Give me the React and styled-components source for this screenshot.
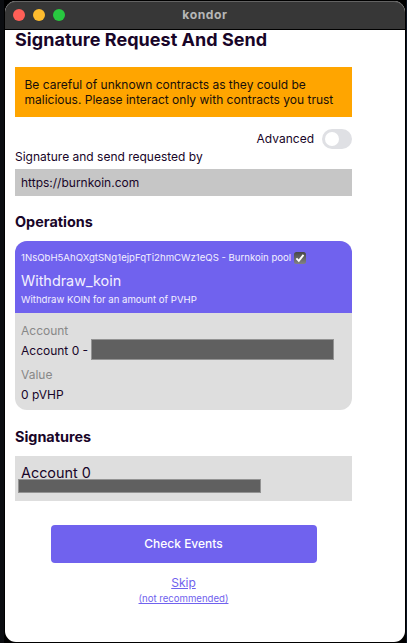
import React from 'react';
import styled, { createGlobalStyle } from 'styled-components';

const GlobalStyle = createGlobalStyle`
  * { box-sizing: border-box; }
  body { margin: 0; background: #05070b; }
`;

const Desktop = styled.div`
  height: 643px;
  padding: 1px 2px 1px 5px;
  overflow: hidden;
  background: linear-gradient(90deg, #0b0d11 0 4px, #000 4px 406px, #0a1320 406px);
  font-family: Inter, 'Liberation Sans', sans-serif;
  color: #180528;
`;

const Window = styled.div`
  height: 641px;
  display: flex;
  flex-direction: column;
  overflow: hidden;
  background: #fff;
  border-radius: 11px;
`;

const TitleBar = styled.header`
  height: 29px;
  flex: none;
  display: grid;
  grid-template-columns: 60px 1fr 60px;
  align-items: center;
  background: #373737;
  border-bottom: 1px solid #000;
  border-radius: 11px 11px 0 0;
  box-shadow: inset 0 1px 0 #636363;
`;

const Lights = styled.div`
  display: flex;
  gap: 8px;
  padding-left: 8px;
`;

const Light = styled.span`
  width: 12px;
  height: 12px;
  border-radius: 50%;
  background: ${(p) => p.$color};
`;

const WindowTitle = styled.div`
  text-align: center;
  font-size: 12.2px;
  font-weight: 700;
  letter-spacing: 0.55px;
  line-height: 15px;
  padding-bottom: 1px;
  color: #b6b6b6;
`;

const Content = styled.main`
  width: 347px;
  padding-left: 10px;
  display: flex;
  flex-direction: column;
`;

const Heading = styled.h1`
  margin: 0 0 17px;
  font-size: 18px;
  line-height: 20px;
  font-weight: 700;
  letter-spacing: 0.04px;
  white-space: nowrap;
`;

const Warning = styled.div`
  height: 50px;
  padding: 10px 9.5px;
  background: #ffa500;
  color: #180f0a;
  font-size: 12px;
  line-height: 15px;
  white-space: nowrap;
`;

const AdvancedRow = styled.div`
  display: flex;
  justify-content: flex-end;
  align-items: center;
  gap: 8px;
  margin-top: 12px;
  font-size: 12px;
  line-height: 20px;
`;

const Switch = styled.span`
  display: flex;
  align-items: center;
  width: 30px;
  height: 20px;
  padding: 0 3px;
  border-radius: 10px;
  background: #dfe0e4;
`;

const Knob = styled.span`
  width: 14px;
  height: 14px;
  border-radius: 50%;
  background: #fff;
`;

const Caption = styled.div`
  font-size: 12px;
  line-height: 15px;
  margin-bottom: 5px;
`;

const Origin = styled.div`
  height: 27px;
  padding: 0 6px;
  background: #c6c6c6;
  font-size: 12px;
  line-height: 27px;
`;

const SectionTitle = styled.h2`
  margin: ${(p) => p.$top}px 0 10px;
  font-size: 14.4px;
  line-height: 18px;
  font-weight: 700;
`;

const Card = styled.section`
  height: 169px;
  overflow: hidden;
  border-radius: 12px;
  background: #dedede;
`;

const CardHeader = styled.div`
  height: 72px;
  padding: 9px 6px 0;
  background: #7062ee;
  color: #f3f0ff;
`;

const Contract = styled.div`
  display: flex;
  align-items: center;
  gap: 3px;
  height: 15px;
  font-size: 9.6px;
  white-space: nowrap;
`;

const Method = styled.div`
  margin-top: 6px;
  font-size: 14.4px;
  line-height: 20px;
`;

const Description = styled.div`
  margin-top: 2px;
  font-size: 9.6px;
  line-height: 14px;
`;

const Fields = styled.div`
  padding: 8px 6px 0;
`;

const Label = styled.div`
  font-size: 12px;
  line-height: 20px;
  color: #888;
`;

const Value = styled.div`
  position: relative;
  font-size: 12px;
  line-height: 20px;
  margin-bottom: 4px;
`;

const Redaction = styled.span`
  position: absolute;
  left: ${(p) => p.$left}px;
  top: ${(p) => p.$top}px;
  width: 243px;
  height: ${(p) => p.$height}px;
  background: #606060;
  border: 1px solid #939393;
`;

const Signature = styled.div`
  position: relative;
  height: 45px;
  padding: 7px 6px;
  background: #dedede;
  font-size: 14.4px;
  line-height: 20px;
`;

const Actions = styled.div`
  display: flex;
  flex-direction: column;
  align-items: center;
  margin-top: 24px;
`;

const CheckButton = styled.button`
  width: 266px;
  height: 38px;
  margin-bottom: 12px;
  padding: 0;
  border: 0;
  border-radius: 4px;
  background: #7062ee;
  color: #fff;
  font: 500 12px/38px Inter, sans-serif;
`;

const SkipLink = styled.a`
  display: flex;
  flex-direction: column;
  align-items: center;
  color: #7062ee;
`;

const LinkText = styled.span`
  font-size: ${(p) => (p.$small ? 9.6 : 12)}px;
  line-height: 16px;
  text-decoration: underline;
`;

const CheckEmoji = () => (
  <svg width="12" height="12" viewBox="0 0 12 12">
    <defs>
      <linearGradient id="check-face" x1="0" y1="0" x2="0" y2="1">
        <stop offset="0" stopColor="#474747" />
        <stop offset="1" stopColor="#828282" />
      </linearGradient>
    </defs>
    <rect width="12" height="12" rx="2.5" fill="url(#check-face)" />
    <path d="M2.4 6.4 L4.8 8.8 L9.5 2.8" fill="none" stroke="#fff" strokeWidth="1.9" />
  </svg>
);

export default function App() {
  return (
    <>
      <GlobalStyle />
      <Desktop>
        <Window>
          <TitleBar>
            <Lights>
              <Light $color="#ff5f57" />
              <Light $color="#febc2e" />
              <Light $color="#28c840" />
            </Lights>
            <WindowTitle>kondor</WindowTitle>
          </TitleBar>
          <Content>
            <Heading>Signature Request And Send</Heading>
            <Warning>
              Be careful of unknown contracts as they could be
              <br />
              malicious. Please interact only with contracts you trust
            </Warning>
            <AdvancedRow>
              Advanced
              <Switch role="switch" aria-checked="false">
                <Knob />
              </Switch>
            </AdvancedRow>
            <Caption>Signature and send requested by</Caption>
            <Origin>https://burnkoin.com</Origin>
            <SectionTitle $top={17}>Operations</SectionTitle>
            <Card>
              <CardHeader>
                <Contract>
                  1NsQbH5AhQXgtSNg1ejpFqTi2hmCWz1eQS - Burnkoin pool
                  <CheckEmoji />
                </Contract>
                <Method>Withdraw_koin</Method>
                <Description>Withdraw KOIN for an amount of PVHP</Description>
              </CardHeader>
              <Fields>
                <Label>Account</Label>
                <Value>
                  Account 0 -
                  <Redaction $left={70} $top={-2} $height={21} />
                </Value>
                <Label>Value</Label>
                <Value>0 pVHP</Value>
              </Fields>
            </Card>
            <SectionTitle $top={18}>Signatures</SectionTitle>
            <Signature>
              Account 0
              <Redaction $left={3} $top={23} $height={14} />
            </Signature>
            <Actions>
              <CheckButton>Check Events</CheckButton>
              <SkipLink>
                <LinkText>Skip</LinkText>
                <LinkText $small>(not recommended)</LinkText>
              </SkipLink>
            </Actions>
          </Content>
        </Window>
      </Desktop>
    </>
  );
}
